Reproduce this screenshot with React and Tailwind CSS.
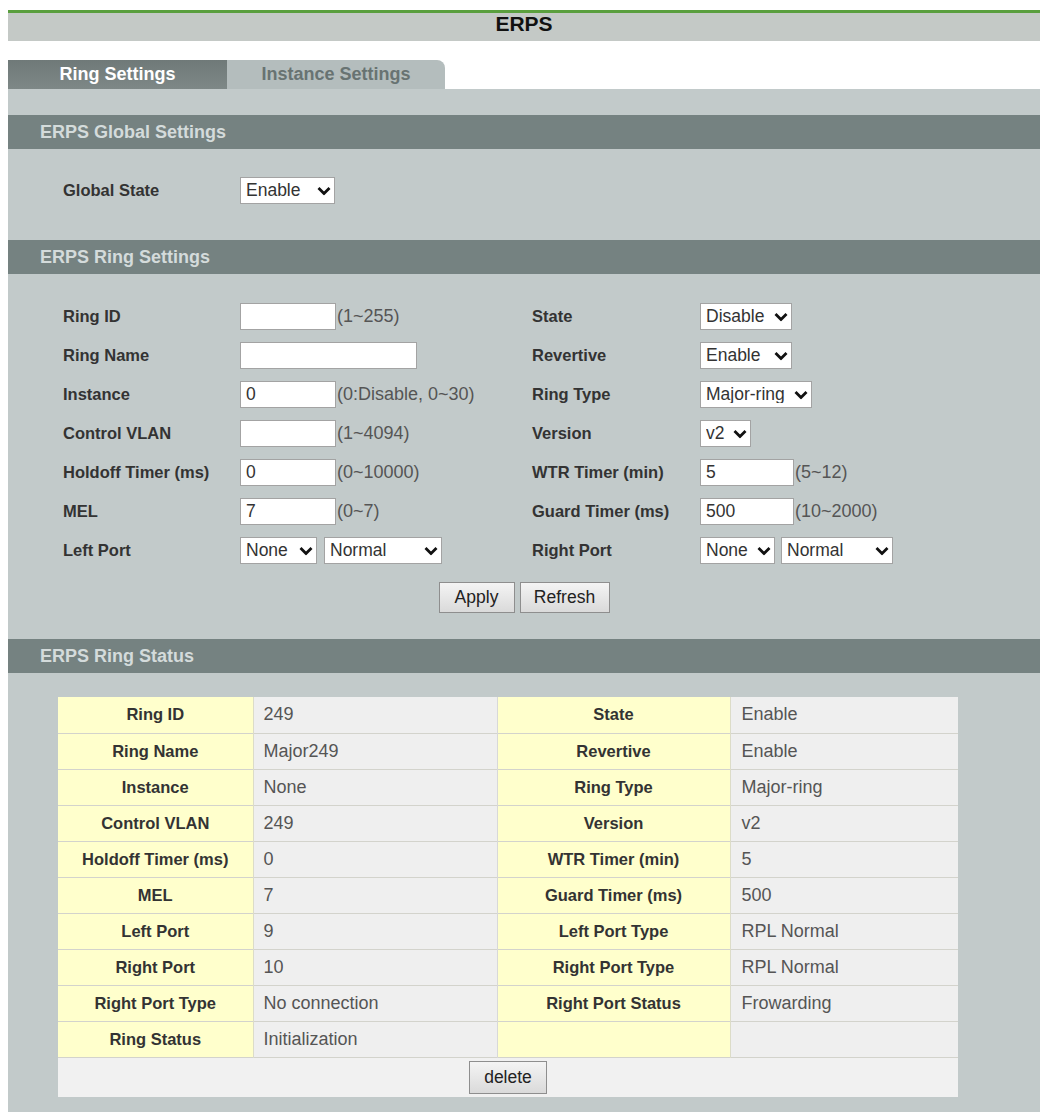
import React from "react";

// Small chevron used on the drop-downs
const Chevron = () => (
  <svg
    width="14"
    height="9"
    viewBox="0 0 14 9"
    className="pointer-events-none absolute right-[4px] top-1/2 -translate-y-1/2"
  >
    <path d="M1.5 1.5 L7 7 L12.5 1.5" fill="none" stroke="#111" strokeWidth="2.8" />
  </svg>
);

const Select = ({ value, options, width }) => (
  <div className={`relative h-[27px] ${width}`}>
    <select
      defaultValue={value}
      className="h-full w-full appearance-none border border-[#a3a3a3] bg-white pl-[5px] pr-[20px] text-[17.5px] leading-none text-[#333]"
    >
      {options.map((o) => (
        <option key={o}>{o}</option>
      ))}
    </select>
    <Chevron />
  </div>
);

const TextInput = ({ value = "", width = "w-[96px]" }) => (
  <input
    defaultValue={value}
    className={`h-[27px] ${width} border border-[#a3a3a3] bg-white px-[5px] text-[17.5px] text-[#333] outline-none`}
  />
);

const Hint = ({ children }) => (
  <span className="ml-[1px] text-[18px] text-[#555]">{children}</span>
);

const Row = ({ label, labelWidth, children }) => (
  <div className="flex h-[39px] items-center">
    <span className={`${labelWidth} shrink-0 text-[16.5px] font-bold text-[#333]`}>{label}</span>
    <div className="flex items-center">{children}</div>
  </div>
);

const SectionHeader = ({ title }) => (
  <div className="flex h-[34px] items-center bg-[#758281] pl-[32px] text-[18px] font-bold text-[#d4dbdb]">
    {title}
  </div>
);

const Button = ({ children, width }) => (
  <button
    className={`h-[31px] ${width} border border-[#8e8e8e] bg-gradient-to-b from-[#f4f4f4] to-[#dadada] text-[17.5px] text-[#222]`}
  >
    {children}
  </button>
);

const statusRows = [
  ["Ring ID", "249", "State", "Enable"],
  ["Ring Name", "Major249", "Revertive", "Enable"],
  ["Instance", "None", "Ring Type", "Major-ring"],
  ["Control VLAN", "249", "Version", "v2"],
  ["Holdoff Timer (ms)", "0", "WTR Timer (min)", "5"],
  ["MEL", "7", "Guard Timer (ms)", "500"],
  ["Left Port", "9", "Left Port Type", "RPL Normal"],
  ["Right Port", "10", "Right Port Type", "RPL Normal"],
  ["Right Port Type", "No connection", "Right Port Status", "Frowarding"],
  ["Ring Status", "Initialization", "", ""],
];

const L = "w-[177px]";
const R = "w-[168px]";
const states = ["Enable", "Disable"];

export default function App() {
  return (
    <div className="min-h-[1112px] w-[1046px] bg-white pl-[8px] pr-[6px] pt-[10px] font-['Liberation_Sans',Arial,sans-serif]">
      {/* page title */}
      <div className="h-[31px] border-t-[3px] border-[#5a9f3e] bg-[#c4c9c6] text-center text-[21px] font-bold leading-[22px] text-[#111]">
        ERPS
      </div>

      {/* tabs */}
      <div className="mt-[19px] flex h-[29px]">
        <div className="flex w-[219px] items-center justify-center bg-gradient-to-b from-[#6f7978] to-[#7e8887] text-[18px] font-bold text-white">
          Ring Settings
        </div>
        <div className="flex w-[218px] items-center justify-center rounded-tr-[8px] bg-[#b4bdbd] text-[18px] font-bold text-[#687372]">
          Instance Settings
        </div>
      </div>

      <div className="bg-[#c2caca] pb-[17px] pt-[26px]">
        <SectionHeader title="ERPS Global Settings" />
        <div className="pb-[30px] pl-[55px] pt-[22px]">
          <Row label="Global State" labelWidth={L}>
            <Select value="Enable" options={states} width="w-[95px]" />
          </Row>
        </div>

        <SectionHeader title="ERPS Ring Settings" />
        <div className="pb-[26px] pt-[23px]">
          <div className="grid grid-cols-[469px_1fr] pl-[55px]">
            <div>
              <Row label="Ring ID" labelWidth={L}>
                <TextInput />
                <Hint>(1~255)</Hint>
              </Row>
              <Row label="Ring Name" labelWidth={L}>
                <TextInput width="w-[177px]" />
              </Row>
              <Row label="Instance" labelWidth={L}>
                <TextInput value="0" />
                <Hint>(0:Disable, 0~30)</Hint>
              </Row>
              <Row label="Control VLAN" labelWidth={L}>
                <TextInput />
                <Hint>(1~4094)</Hint>
              </Row>
              <Row label="Holdoff Timer (ms)" labelWidth={L}>
                <TextInput value="0" />
                <Hint>(0~10000)</Hint>
              </Row>
              <Row label="MEL" labelWidth={L}>
                <TextInput value="7" />
                <Hint>(0~7)</Hint>
              </Row>
              <Row label="Left Port" labelWidth={L}>
                <div className="flex gap-[7px]">
                  <Select value="None" options={["None"]} width="w-[77px]" />
                  <Select value="Normal" options={["Normal", "RPL"]} width="w-[118px]" />
                </div>
              </Row>
            </div>
            <div>
              <Row label="State" labelWidth={R}>
                <Select value="Disable" options={states} width="w-[92px]" />
              </Row>
              <Row label="Revertive" labelWidth={R}>
                <Select value="Enable" options={states} width="w-[92px]" />
              </Row>
              <Row label="Ring Type" labelWidth={R}>
                <Select value="Major-ring" options={["Major-ring", "Sub-ring"]} width="w-[112px]" />
              </Row>
              <Row label="Version" labelWidth={R}>
                <Select value="v2" options={["v1", "v2"]} width="w-[51px]" />
              </Row>
              <Row label="WTR Timer (min)" labelWidth={R}>
                <TextInput value="5" width="w-[94px]" />
                <Hint>(5~12)</Hint>
              </Row>
              <Row label="Guard Timer (ms)" labelWidth={R}>
                <TextInput value="500" width="w-[94px]" />
                <Hint>(10~2000)</Hint>
              </Row>
              <Row label="Right Port" labelWidth={R}>
                <div className="flex gap-[6px]">
                  <Select value="None" options={["None"]} width="w-[75px]" />
                  <Select value="Normal" options={["Normal", "RPL"]} width="w-[112px]" />
                </div>
              </Row>
            </div>
          </div>
          <div className="mt-[12px] flex justify-center gap-[5px]">
            <Button width="w-[76px]">Apply</Button>
            <Button width="w-[90px]">Refresh</Button>
          </div>
        </div>

        <SectionHeader title="ERPS Ring Status" />
        <div className="pl-[50px] pt-[24px]">
          <table className="w-[900px] table-fixed border-collapse">
            <colgroup>
              <col className="w-[195px]" />
              <col className="w-[244px]" />
              <col className="w-[233px]" />
              <col className="w-[228px]" />
            </colgroup>
            <tbody>
              {statusRows.map(([l1, v1, l2, v2], i) => (
                <tr key={i} className="h-[36px] border-b border-[#d3d3cc]">
                  <td className="border-r border-[#dcdcc8] bg-[#ffffcc] text-center text-[16.5px] font-bold text-[#333]">
                    {l1}
                  </td>
                  <td className="border-r border-[#d8d8d8] bg-[#efefef] pl-[10px] text-[18px] text-[#555]">
                    {v1}
                  </td>
                  <td className="border-r border-[#dcdcc8] bg-[#ffffcc] text-center text-[16.5px] font-bold text-[#333]">
                    {l2}
                  </td>
                  <td className="bg-[#efefef] pl-[11px] text-[18px] text-[#555]">{v2}</td>
                </tr>
              ))}
              <tr className="h-[40px] bg-[#f1f1f1]">
                <td colSpan={4} className="text-center">
                  <button className="h-[33px] w-[78px] border border-[#8e8e8e] bg-gradient-to-b from-[#f4f4f4] to-[#dadada] text-[17.5px] text-[#222]">
                    delete
                  </button>
                </td>
              </tr>
            </tbody>
          </table>
        </div>
      </div>
    </div>
  );
}
